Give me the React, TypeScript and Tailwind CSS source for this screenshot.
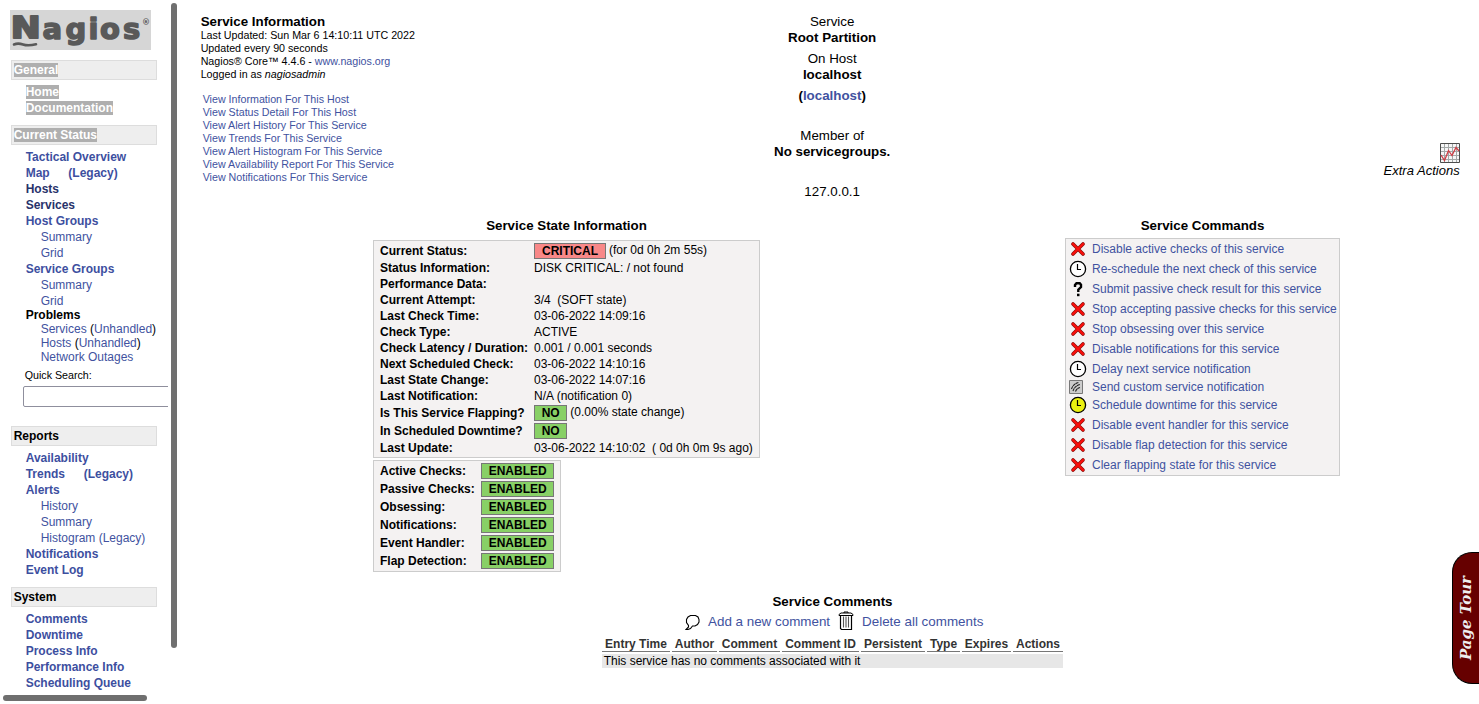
import React from "react";

const link = "text-[#4152a0]";

const SelectedText = ({ children }: { children: React.ReactNode }) => (
  <span className="bg-[#afafaf] text-white">{children}</span>
);

const NavHeading = ({ children }: { children: React.ReactNode }) => (
  <h2 className="h-5 w-[146px] border border-[#dddddd] bg-[#eeeeee] pl-[1.67px] font-bold leading-[18px]">{children}</h2>
);

type Item = { text: React.ReactNode; kind?: "sub" | "dark" };

const NavList = ({ items }: { items: Item[] }) => (
  <ul className="pt-1 pl-[14.67px]">
    {items.map((item, i) => (
      <li
        key={i}
        className={
          item.kind === "sub"
            ? "h-4 pl-[15px] leading-4 text-[#4152a0]"
            : item.kind === "dark"
              ? "h-4 font-bold leading-4 text-[#28336b]"
              : "h-4 font-bold leading-4 text-[#3d4f9f]"
        }
      >
        {item.text}
      </li>
    ))}
  </ul>
);

const Logo = () => (
  <svg width="141" height="40" viewBox="0 0 141 40" className="block bg-[#d6d6d6]">
    <g fill="#595959" stroke="#595959" strokeLinejoin="round" fontFamily="'DejaVu Sans', sans-serif" fontWeight="bold">
      <text x="0.800" y="28" fontSize="30" strokeWidth="2" textLength="30" lengthAdjust="spacingAndGlyphs">N</text>
      <text x="32.500 55.500 78.500 90 113" y="28.500" fontSize="29" strokeWidth="1.500">agios</text>
      <text x="132" y="14.500" fontSize="8.500" strokeWidth="0" textLength="8" lengthAdjust="spacingAndGlyphs">®</text>
    </g>
    <path d="M4 34.500Q8 32.800 13 34.500T26 34.300" fill="none" stroke="#595959" strokeWidth="2.600" strokeLinecap="round" />
  </svg>
);

const gap = "\u00a0";

function Sidebar() {
  return (
    <aside className="grid h-[704px] w-[180px] shrink-0 grid-cols-[168px_12px] grid-rows-[692px_12px] text-xs">
      <nav className="overflow-hidden pt-2.5 pl-[11px]">
        <div className="-ml-px">
          <Logo />
        </div>
        <div className="mt-2.5">
          <NavHeading><SelectedText>General</SelectedText></NavHeading>
          <NavList items={[{ text: <SelectedText>Home</SelectedText> }, { text: <SelectedText>Documentation</SelectedText> }]} />
        </div>
        <div className="mt-[9px]">
          <NavHeading><SelectedText>Current Status</SelectedText></NavHeading>
          <NavList
            items={[
              { text: "Tactical Overview" },
              { text: <span className="flex gap-[18.67px]"><span>Map</span><span>(Legacy)</span></span> },
              { text: "Hosts", kind: "dark" },
              { text: "Services", kind: "dark" },
              { text: "Host Groups" },
              { text: "Summary", kind: "sub" },
              { text: "Grid", kind: "sub" },
              { text: "Service Groups" },
              { text: "Summary", kind: "sub" },
              { text: "Grid", kind: "sub" },
            ]}
          />
          <div className="-mt-px pl-[14.67px] leading-[14px] whitespace-nowrap">
            <div className="font-bold">Problems</div>
            <div className="pl-[15px]"><span className={link}>Services</span> (<span className={link}>Unhandled</span>)</div>
            <div className="pl-[15px]"><span className={link}>Hosts</span> (<span className={link}>Unhandled</span>)</div>
            <div className={"pl-[15px] " + link}>Network Outages</div>
          </div>
          <div className="mt-1 h-[18px] pl-[13.67px] text-[10.7px] leading-[14px]">Quick Search:</div>
          <input aria-label="Quick Search" className="ml-3 block h-[21px] w-[170px] rounded-[2px] border border-[#8f8f9d] bg-white" />
        </div>
        <div className="mt-[19px]">
          <NavHeading>Reports</NavHeading>
          <NavList
            items={[
              { text: "Availability" },
              { text: <span className="flex gap-[18.67px]"><span>Trends</span><span>(Legacy)</span></span> },
              { text: "Alerts" },
              { text: "History", kind: "sub" },
              { text: "Summary", kind: "sub" },
              { text: "Histogram (Legacy)", kind: "sub" },
              { text: "Notifications" },
              { text: "Event Log" },
            ]}
          />
        </div>
        <div className="mt-[9px]">
          <NavHeading>System</NavHeading>
          <NavList
            items={[{ text: "Comments" }, { text: "Downtime" }, { text: "Process Info" }, { text: "Performance Info" }, { text: "Scheduling Queue" }]}
          />
        </div>
      </nav>
      <div className="pt-[3px] pl-[3px]">
        <div className="h-[645px] w-1.5 rounded-full bg-[#6f6f6f]" />
      </div>
      <div className="pt-[3px] pl-[3px]">
        <div className="h-1.5 w-36 rounded-full bg-[#6f6f6f]" />
      </div>
      <div />
    </aside>
  );
}

function Header() {
  return (
    <header className="grid h-[205px] grid-cols-[420px_423px_416px] pt-3.5 pl-[20.67px] text-[13.33px] leading-4">
      <div className="text-[10.7px] leading-[13px]">
        <h1 className="h-[15px] text-[13.33px] leading-4 font-bold">Service Information</h1>
        <div>Last Updated: Sun Mar 6 14:10:11 UTC 2022</div>
        <div>Updated every 90 seconds</div>
        <div>Nagios® Core™ 4.4.6 - <span className={link}>www.nagios.org</span></div>
        <div>Logged in as <i>nagiosadmin</i></div>
        <ul className={"mt-3 pl-0.5 " + link}>
          <li>View Information For This Host</li>
          <li>View Status Detail For This Host</li>
          <li>View Alert History For This Service</li>
          <li>View Trends For This Service</li>
          <li>View Alert Histogram For This Service</li>
          <li>View Availability Report For This Service</li>
          <li>View Notifications For This Service</li>
        </ul>
      </div>
      <div className="text-center">
        <div>Service</div>
        <div className="font-bold">Root Partition</div>
        <div className="mt-[5px]">On Host</div>
        <div className="font-bold">localhost</div>
        <div className="mt-[5px] font-bold">(<span className={link}>localhost</span>)</div>
        <div className="mt-6">Member of</div>
        <div className="font-bold">No servicegroups.</div>
        <div className="mt-6">127.0.0.1</div>
      </div>
      <div className="flex flex-col items-end pt-[129px]">
        <svg width="20" height="20" viewBox="0 0 20 20">
          <path d="M0 0H20V20H0Z" fill="#f6f6f6" />
          <path d="M4.500 0V20M8.500 0V20M12.500 0V20M16.500 0V20M0 4.500H20M0 8.500H20M0 12.500H20M0 16.500H20" stroke="#a3a8a8" fill="none" />
          <path d="M.5 .5H19.500V19.500H.5Z" stroke="#4d4d4d" fill="none" />
          <path d="M1 12L4.500 17.500L8.500 7.500L12 12.500L16 4.500L19 8" stroke="#cf3e46" strokeWidth="1.300" fill="none" />
        </svg>
        <i className="text-[13px]">Extra Actions</i>
      </div>
    </header>
  );
}

const Badge = ({ children, red }: { children: string; red?: boolean }) => (
  <span className={red ? "h-4 border border-[#777777] bg-[#f88888] px-[7px] leading-[14px] font-bold" : "h-4 border border-[#777777] bg-[#88d066] px-[6.67px] leading-[14px] font-bold"}>
    {children}
  </span>
);

const WithBadge = ({ badge, red, note }: { badge: string; red?: boolean; note?: string }) => (
  <span className="flex items-center gap-[3px]">
    <Badge red={red}>{badge}</Badge>
    {note && <span className="mb-0.5 leading-4">{note}</span>}
  </span>
);

const stateRows: { label: string; value: React.ReactNode; tall?: boolean }[] = [
  { label: "Current Status:", value: <WithBadge badge="CRITICAL" red note="(for 0d 0h 2m 55s)" />, tall: true },
  { label: "Status Information:", value: "DISK CRITICAL: / not found" },
  { label: "Performance Data:", value: "" },
  { label: "Current Attempt:", value: `3/4${gap} (SOFT state)` },
  { label: "Last Check Time:", value: "03-06-2022 14:09:16" },
  { label: "Check Type:", value: "ACTIVE" },
  { label: "Check Latency / Duration:", value: "0.001 / 0.001 seconds" },
  { label: "Next Scheduled Check:", value: "03-06-2022 14:10:16" },
  { label: "Last State Change:", value: "03-06-2022 14:07:16" },
  { label: "Last Notification:", value: "N/A (notification 0)" },
  { label: "Is This Service Flapping?", value: <WithBadge badge="NO" note="(0.00% state change)" />, tall: true },
  { label: "In Scheduled Downtime?", value: <WithBadge badge="NO" />, tall: true },
  { label: "Last Update:", value: `03-06-2022 14:10:02${gap} ( 0d 0h 0m 9s ago)` },
];

const checks = ["Active Checks:", "Passive Checks:", "Obsessing:", "Notifications:", "Event Handler:", "Flap Detection:"];

function StateInfo() {
  return (
    <section className="w-[387px]">
      <h2 className="mb-1.5 text-center text-[13.33px] leading-4 font-bold">Service State Information</h2>
      <div className="h-[218px] border border-[#cccccc] bg-[#f4f2f2] py-px pl-1.5 text-xs">
        {stateRows.map((row) => (
          <div key={row.label} className={row.tall ? "flex h-[18px] items-center leading-4" : "flex h-4 items-center leading-4"}>
            <div className="w-[154px] shrink-0 font-bold">{row.label}</div>
            <div className="whitespace-nowrap">{row.value}</div>
          </div>
        ))}
      </div>
      <div className="mt-0.5 h-28 w-[188px] border border-[#cccccc] bg-[#f4f2f2] py-px pl-1.5 text-xs">
        {checks.map((label) => (
          <div key={label} className="flex h-[18px] items-center leading-4">
            <div className="w-[101px] shrink-0 font-bold">{label}</div>
            <WithBadge badge="ENABLED" />
          </div>
        ))}
      </div>
    </section>
  );
}

const CrossIcon = () => (
  <svg width="16" height="16" viewBox="0 0 16 16">
    <path d="M3 3L13 13M13 3L3 13" stroke="#8a0e0a" strokeWidth="3.600" strokeLinecap="round" fill="none" />
    <path d="M3 3L13 13M13 3L3 13" stroke="#fa0f0c" strokeWidth="2.300" strokeLinecap="round" fill="none" />
  </svg>
);

const ClockIcon = ({ fill }: { fill: string }) => (
  <svg width="18" height="18" viewBox="0 0 18 18">
    <circle cx="9" cy="9" r="7.600" fill={fill} stroke="#000" strokeWidth="1.300" />
    <path d="M8.500 4V9.500H12" fill="none" stroke="#000" strokeWidth="1.200" />
  </svg>
);

const QuestionIcon = () => (
  <svg width="16" height="16" viewBox="0 0 16 16">
    <path d="M5 6V4L6.500 2.200H9.700L11 3.800V6L8.300 8.700V11" fill="none" stroke="#000" strokeWidth="2.400" />
    <path d="M7 12.700H9.500V15.200H7Z" />
  </svg>
);

const NotifyIcon = () => (
  <svg width="14" height="14" viewBox="0 0 14 14">
    <path d="M.5 .5H13.500V13.500H.5Z" fill="#cccccc" stroke="#777777" />
    <path d="M2.500 9Q4 4 9.500 2.500M4 11Q5.500 6 11 4.500M6.500 11.500Q7.500 8.500 11 7.500" fill="none" stroke="#222222" strokeWidth="1.100" strokeDasharray="3 .4" />
  </svg>
);

const commands: [string, string][] = [
  ["x", "Disable active checks of this service"],
  ["clock", "Re-schedule the next check of this service"],
  ["question", "Submit passive check result for this service"],
  ["x", "Stop accepting passive checks for this service"],
  ["x", "Stop obsessing over this service"],
  ["x", "Disable notifications for this service"],
  ["clock", "Delay next service notification"],
  ["notify", "Send custom service notification"],
  ["downtime", "Schedule downtime for this service"],
  ["x", "Disable event handler for this service"],
  ["x", "Disable flap detection for this service"],
  ["x", "Clear flapping state for this service"],
];

function Commands() {
  return (
    <section className="w-[275px]">
      <h2 className="mb-1 text-center text-[13.33px] leading-4 font-bold">Service Commands</h2>
      <ul className="h-[238px] border border-[#cccccc] bg-[#f4f2f2] pl-[3px] text-xs">
        {commands.map(([icon, label]) => (
          <li key={label} className={icon === "notify" ? "flex h-4 items-center whitespace-nowrap" : "flex h-5 items-center whitespace-nowrap"}>
            <span className={icon === "notify" ? "flex w-[23px] shrink-0" : "flex w-[23px] shrink-0 justify-center pr-[5px]"}>
              {icon === "x" && <CrossIcon />}
              {icon === "clock" && <ClockIcon fill="#ffffff" />}
              {icon === "downtime" && <ClockIcon fill="#eaf010" />}
              {icon === "question" && <QuestionIcon />}
              {icon === "notify" && <NotifyIcon />}
            </span>
            <span className={link}>{label}</span>
          </li>
        ))}
      </ul>
    </section>
  );
}

function Comments() {
  return (
    <section className="mt-[22px] ml-[422px] w-[461px]">
      <h2 className="text-center text-[13.33px] leading-4 font-bold">Service Comments</h2>
      <div className="flex h-6 items-center pl-[83px] text-[13.4px] whitespace-nowrap">
        <svg width="16" height="17" viewBox="0 0 16 17" className="mr-[7px] shrink-0">
          <path d="M5.500 1.500H10.500L13 3L14 5.500V8L12.500 10.500L10 12H7.500L5.500 14.500L3 15.500H1L3.500 13V11.500L1.500 8.500V5.500L3 3Z" fill="#fff" stroke="#000" strokeWidth="1.100" />
        </svg>
        <span className={link}>Add a new comment</span>
        <svg width="16" height="20" viewBox="0 0 16 20" className="mr-2 ml-2 shrink-0 -translate-y-px">
          <path d="M2.500 4.500H13.500V18.500H3.500L2.500 17.500Z" fill="#fff" stroke="#000" strokeWidth="1.200" />
          <path d="M1 3.500L3 2H13L15 3.500V4.500H1ZM6 2V1H10V2" fill="#fff" stroke="#000" />
          <path d="M5.500 5.500V16.500M8 5.500V16.500M10.500 5.500V16.500" stroke="#555555" strokeWidth="1.100" />
        </svg>
        <span className={link}>Delete all comments</span>
      </div>
      <div className="mt-[3px] grid grid-cols-[68px_45px_61px_77px_64px_33px_49px_50px] gap-x-0.5 text-xs font-bold text-[#333333]">
        {["Entry Time", "Author", "Comment", "Comment ID", "Persistent", "Type", "Expires", "Actions"].map((name) => (
          <div key={name} className="h-[15px] border-b border-[#777777] text-center leading-[14px] whitespace-nowrap">{name}</div>
        ))}
      </div>
      <div className="mt-0.5 h-3.5 bg-[#e7e7e7] pl-[1.67px] text-xs leading-[14px]">This service has no comments associated with it</div>
    </section>
  );
}

export default function App() {
  return (
    <div className="relative flex h-[704px] w-[1479px] overflow-hidden bg-white font-['Liberation_Sans',Arial,sans-serif] text-black">
      <Sidebar />
      <main className="w-[1299px]">
        <Header />
        <div className="flex gap-[305px] pt-[13px] pl-[193px]">
          <StateInfo />
          <Commands />
        </div>
        <Comments />
      </main>
      <div className="absolute top-[552px] right-0 flex h-[132px] w-[27px] items-center justify-center rounded-l-[20px] border border-r-0 border-black bg-[#660000]">
        <span className="rotate-180 text-[15px] leading-[18px] font-bold whitespace-nowrap text-[#eeeeee] italic [font-family:'DejaVu_Serif',serif] [writing-mode:vertical-rl]">Page Tour</span>
      </div>
    </div>
  );
}
